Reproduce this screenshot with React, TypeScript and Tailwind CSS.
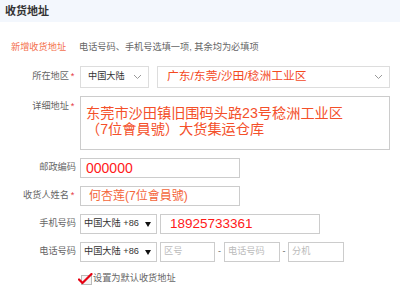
const font = 'font-["Liberation_Sans","Noto_Sans_CJK_SC",sans-serif]';

function Chevron({ className = '' }: { className?: string }) {
  return (
    <svg className={className} width="9" height="6" viewBox="0 0 9 6" fill="none">
      <path d="M1 1l3.5 3.5L8 1" stroke="#999" strokeWidth="1" />
    </svg>
  );
}

function Label({ text, required }: { text: string; required?: boolean }) {
  return (
    <div className="w-[76px] shrink-0 flex justify-end text-[9.2px] text-[#666] leading-none">
      <span>{text}</span>
      {required && <span className="w-[7px] text-center text-[#e4393c]">*</span>}
    </div>
  );
}

function CountrySelect() {
  return (
    <div className="w-[77px] h-[20px] border border-[#ccc] flex items-center pl-[3px] pr-[5px] text-[9.2px] text-[#333]">
      <span>中国大陆 +86</span>
      <svg className="ml-auto" width="6" height="5" viewBox="0 0 6 5">
        <path d="M0 0h6L3 5z" fill="#111" />
      </svg>
    </div>
  );
}

export default function App() {
  return (
    <div className={`w-[400px] h-[295px] bg-white overflow-hidden ${font}`}>
      <div className="h-[22px] bg-[#f3f7fd] flex items-center pl-[5px] text-[11px] font-bold text-[#333]">
        收货地址
      </div>

      <div className="mt-[19px] h-[14px] flex items-center pl-[11px] text-[9.2px] leading-none">
        <span className="w-[68px] text-[#f4714e]">新增收货地址</span>
        <span className="text-[#666]">电话号码、手机号选填一项, 其余均为必填项</span>
      </div>

      <div className="mt-[11px] flex items-center">
        <Label text="所在地区" required />
        <div className="ml-[4px] w-[69px] h-[22px] border border-[#ddd] flex items-center pl-[7px] pr-[6px] text-[9.2px] text-[#333]">
          <span>中国大陆</span>
          <Chevron className="ml-auto" />
        </div>
        <div className="ml-[8px] w-[233px] h-[22px] border border-[#ddd] flex items-center pl-[9px] pr-[6px] text-[11.8px] text-[#f44a1f]">
          <span>广东/东莞/沙田/稔洲工业区</span>
          <Chevron className="ml-auto" />
        </div>
      </div>

      <div className="mt-[8px] flex items-start">
        <div className="pt-[6px]">
          <Label text="详细地址" required />
        </div>
        <div className="ml-[4px] w-[310px] h-[54px] border border-[#ccc] pl-[5px] pt-[8px] text-[14.2px] leading-[16px] text-[#f4502a]">
          东莞市沙田镇旧围码头路23号稔洲工业区
          <br />
          （7位會員號）大货集运仓库
        </div>
      </div>

      <div className="mt-[8px] flex items-center">
        <Label text="邮政编码" />
        <div className="ml-[4px] w-[160px] h-[20px] border border-[#ccc] flex items-center pl-[5px] text-[14px] text-[#ff1a1a]">
          000000
        </div>
      </div>

      <div className="mt-[8px] flex items-center">
        <Label text="收货人姓名" required />
        <div className="ml-[4px] w-[160px] h-[20px] border border-[#ccc] flex items-center pl-[8px] text-[12px] text-[#f4663a]">
          何杏莲(7位會員號)
        </div>
      </div>

      <div className="mt-[8px] flex items-center">
        <Label text="手机号码" />
        <div className="ml-[4px] flex items-center gap-[3px]">
          <CountrySelect />
          <div className="w-[160px] h-[20px] border border-[#ccc] flex items-center pl-[9px] text-[13.5px] text-[#ff1a1a]">
            18925733361
          </div>
        </div>
      </div>

      <div className="mt-[8px] flex items-center">
        <Label text="电话号码" />
        <div className="ml-[4px] flex items-center">
          <CountrySelect />
          <div className="ml-[3px] w-[55px] h-[20px] border border-[#ccc] flex items-center pl-[3px] text-[9.2px] text-[#bbb]">
            区号
          </div>
          <span className="w-[9px] text-center text-[9px] text-[#666]">-</span>
          <div className="w-[56px] h-[20px] border border-[#ccc] flex items-center pl-[3px] text-[9.2px] text-[#bbb]">
            电话号码
          </div>
          <span className="w-[8px] text-center text-[9px] text-[#666]">-</span>
          <div className="w-[56px] h-[20px] border border-[#ccc] flex items-center pl-[3px] text-[9.2px] text-[#bbb]">
            分机
          </div>
        </div>
      </div>

      <div className="mt-[11px] flex items-center pl-[78px]">
        <svg width="15" height="12" viewBox="0 0 15 12" fill="none">
          <rect x="3.5" y="2.5" width="10" height="9" stroke="#bbb" fill="#f4f4f4" />
          <path d="M1 6.5l3.5 3.5L13.5 1" stroke="#e60012" strokeWidth="2.2" strokeLinecap="round" strokeLinejoin="round" />
        </svg>
        <span className="text-[9.2px] text-[#666] leading-none">设置为默认收货地址</span>
      </div>
    </div>
  );
}
